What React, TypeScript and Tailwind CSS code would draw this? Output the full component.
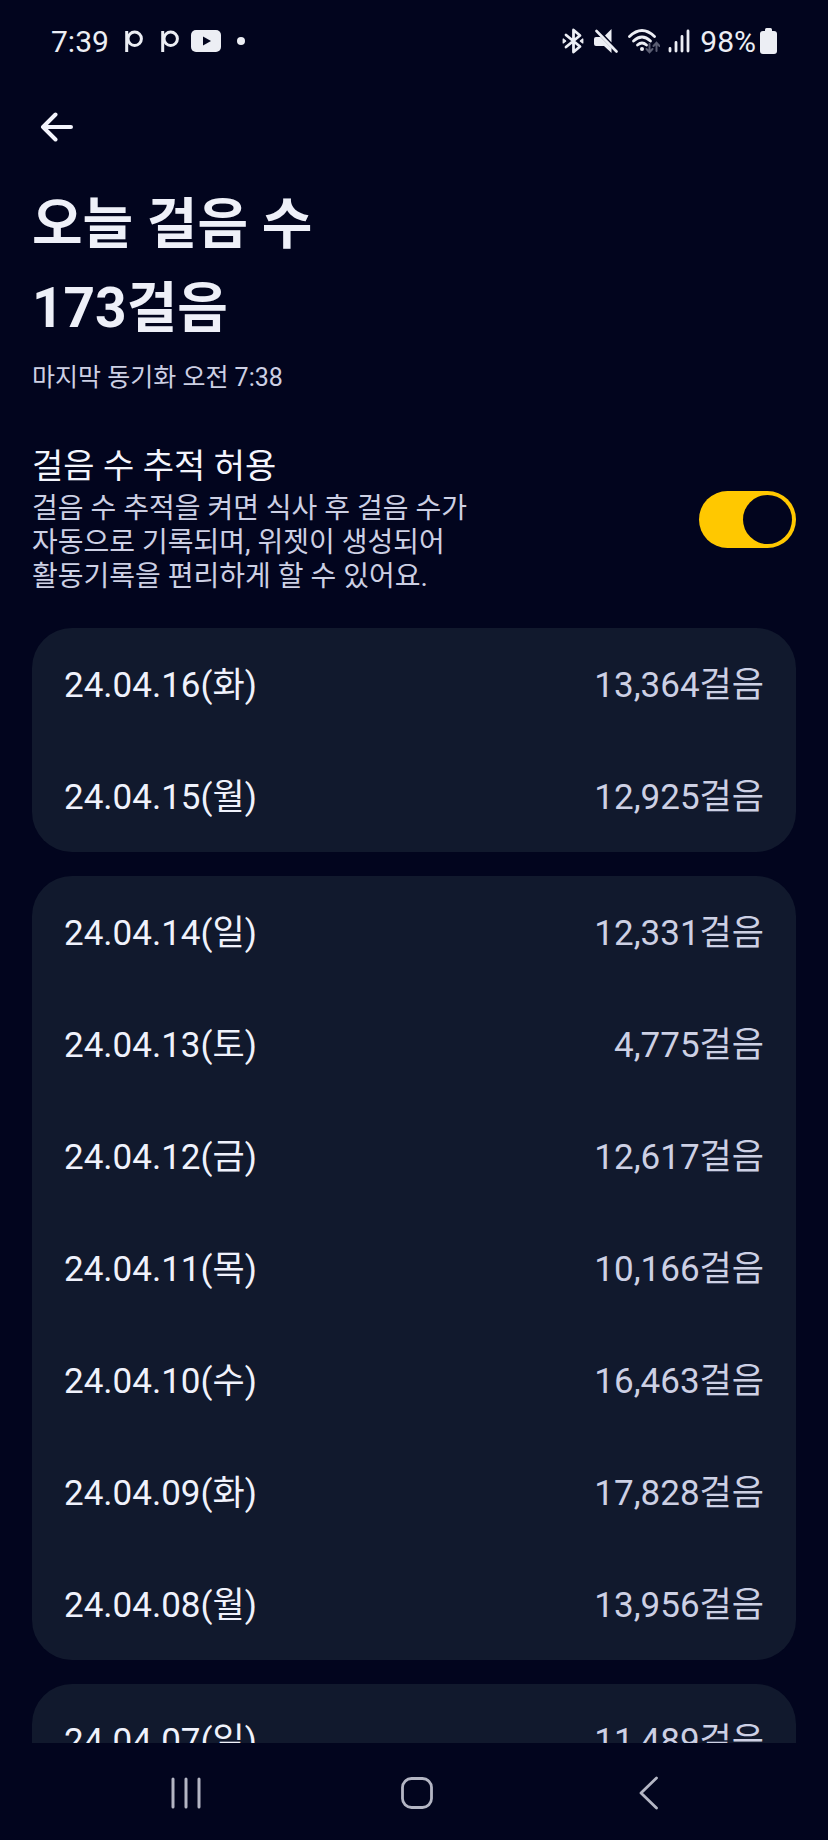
import { useState } from "react";

type StepRecord = {
  date: string;
  steps: number;
};

const weeks: StepRecord[][] = [
  [
    { date: "24.04.16(화)", steps: 13364 },
    { date: "24.04.15(월)", steps: 12925 },
  ],
  [
    { date: "24.04.14(일)", steps: 12331 },
    { date: "24.04.13(토)", steps: 4775 },
    { date: "24.04.12(금)", steps: 12617 },
    { date: "24.04.11(목)", steps: 10166 },
    { date: "24.04.10(수)", steps: 16463 },
    { date: "24.04.09(화)", steps: 17828 },
    { date: "24.04.08(월)", steps: 13956 },
  ],
  [{ date: "24.04.07(일)", steps: 11489 }],
];

const PIcon = () => (
  <svg width="18" height="22" viewBox="0 0 18 22" fill="none" stroke="currentColor" strokeWidth="3">
    <path d="M1.7 1v21" />
    <circle cx="9.7" cy="8.7" r="6.7" />
  </svg>
);

const VideoIcon = () => (
  <svg width="30" height="22" viewBox="0 0 30 22">
    <rect width="30" height="22" rx="5" fill="currentColor" />
    <path d="M12 6.5v9l8-4.5z" fill="#02051e" />
  </svg>
);

const BluetoothIcon = () => (
  <svg width="22" height="26" viewBox="0 0 22 26" fill="none" stroke="currentColor" strokeWidth="2.8" strokeLinejoin="round" strokeLinecap="round">
    <path d="M4 7 18 18.5 11.5 24V2L18 7.5 4 19" />
    <path d="M1.2 11v4l2.5-2zM20.8 11v4l-2.5-2z" fill="currentColor" strokeWidth="1.2" />
  </svg>
);

const MuteIcon = () => (
  <svg width="24" height="26" viewBox="0 0 24 26" fill="currentColor">
    <path d="M11 7.5 17.5 1v13.5z" />
    <path d="M2 9h4.5L17.5 20v5L10 18H2q-2 0-2-2v-5q0-2 2-2z" />
    <path d="m2.5 3 20 20.5" stroke="currentColor" strokeWidth="2.6" strokeLinecap="round" />
  </svg>
);

const WifiIcon = () => (
  <svg width="32" height="26" viewBox="0 0 32 26" fill="none" strokeWidth="2.8" strokeLinecap="round">
    <g stroke="currentColor">
      <path d="M1.5 8.5Q14 -3.5 26.5 8.5" />
      <path d="M5.5 13Q14 5 22.5 13" />
      <path d="M9.5 17Q14 13 18.5 17" />
    </g>
    <circle cx="14" cy="21" r="2" fill="currentColor" />
    <path d="M21.5 16v8m-3-3 3 3.2 3-3.2M28.5 23v-8m-3 3 3-3.2 3 3.2" stroke="#5a5d72" strokeWidth="2" />
  </svg>
);

const SignalIcon = () => (
  <svg width="22" height="24" viewBox="0 0 22 24" stroke="currentColor" strokeWidth="2.8" strokeLinecap="round">
    <path d="M2 19.5V22M8 13.5V22M14 7.5V22M20 2V22" />
  </svg>
);

const BatteryIcon = () => (
  <svg width="17" height="26" viewBox="0 0 17 26" fill="currentColor">
    <rect x="5" width="7" height="6" rx="1.5" />
    <rect y="3" width="17" height="23" rx="3" />
  </svg>
);

const StatusBar = () => (
  <div className="flex h-[82px] shrink-0 items-center justify-between px-[51px] text-[30px] text-[#eceef4]">
    <div className="flex items-center">
      <span>7:39</span>
      <div className="ml-4 flex items-center gap-[18px]">
        <PIcon />
        <PIcon />
      </div>
      <div className="ml-3 flex items-center gap-4">
        <VideoIcon />
        <span className="size-2 rounded-full bg-current" />
      </div>
    </div>
    <div className="flex items-center gap-[10px]">
      <BluetoothIcon />
      <MuteIcon />
      <div className="flex items-center gap-2">
        <WifiIcon />
        <SignalIcon />
      </div>
      <div className="flex items-center gap-1">
        <span>98%</span>
        <BatteryIcon />
      </div>
    </div>
  </div>
);

const TrackingSwitch = () => {
  const [enabled, setEnabled] = useState(true);

  return (
    <section className="mt-[46px] flex items-center justify-between">
      <div>
        <label htmlFor="tracking" className="block text-[34px] leading-[44px] text-[#f4f5fd]">
          걸음 수 추적 허용
        </label>
        <p id="tracking-info" className="mt-1 text-[28px] leading-[34px] text-[#cdd0e4]">
          걸음 수 추적을 켜면 식사 후 걸음 수가
          <br />
          자동으로 기록되며, 위젯이 생성되어
          <br />
          활동기록을 편리하게 할 수 있어요.
        </p>
      </div>
      <input
        id="tracking"
        type="checkbox"
        role="switch"
        aria-describedby="tracking-info"
        checked={enabled}
        onChange={(e) => setEnabled(e.target.checked)}
        className="flex h-[57px] w-[97px] shrink-0 cursor-pointer appearance-none items-center rounded-full bg-slate-600 px-1 before:size-[49px] before:rounded-full before:bg-[#02051e] checked:justify-end checked:bg-[#ffc800]"
      />
    </section>
  );
};

const StepTable = ({ records }: { records: StepRecord[] }) => (
  <div className="rounded-[40px] bg-[#11192d] px-8">
    <table className="w-full text-[35px]">
      <tbody>
        {records.map(({ date, steps }) => (
          <tr key={date} className="h-28">
            <th scope="row" className="p-0 pt-1 text-left font-normal text-[#f0f2fc]">
              {date}
            </th>
            <td className="p-0 pt-1 text-right text-[#cdd0e4]">
              {steps.toLocaleString("en-US")}걸음
            </td>
          </tr>
        ))}
      </tbody>
    </table>
  </div>
);

const NavigationBar = () => (
  <nav className="grid h-[97px] shrink-0 grid-cols-3 pt-[2px] pr-16 pl-[70px] text-[#b4b6c4]">
    <button type="button" aria-label="최근 앱" className="flex items-center justify-center">
      <svg width="30" height="32" viewBox="0 0 30 32" stroke="currentColor" strokeWidth="3" strokeLinecap="round">
        <path d="M2 2v28M15 2v28M28 2v28" />
      </svg>
    </button>
    <button type="button" aria-label="홈" className="flex items-center justify-center">
      <svg width="32" height="32" viewBox="0 0 32 32" fill="none" stroke="currentColor" strokeWidth="2.8">
        <rect x="1.5" y="1.5" width="29" height="29" rx="9" />
      </svg>
    </button>
    <button type="button" aria-label="뒤로" className="flex items-center justify-center">
      <svg width="19" height="34" viewBox="0 0 19 34" fill="none" stroke="currentColor" strokeWidth="2.8" strokeLinecap="round" strokeLinejoin="round">
        <path d="M17.5 2 2 17l15.5 15" />
      </svg>
    </button>
  </nav>
);

const App = () => {
  return (
    <div className="flex h-screen flex-col bg-[#02051e] font-[Roboto,'Noto_Sans_CJK_KR',sans-serif]">
      <StatusBar />
      <header className="flex h-[90px] shrink-0 items-center px-10">
        <button type="button" aria-label="이전" className="text-[#f4f5fd]">
          <svg width="34" height="30" viewBox="0 0 34 30" fill="none" stroke="currentColor" strokeWidth="4" strokeLinecap="round" strokeLinejoin="round">
            <path d="M31 15H3M15.5 2.5 3 15l12.5 12.5" />
          </svg>
        </button>
      </header>
      <main className="min-h-0 flex-1 overflow-y-auto px-8 [scrollbar-width:none]">
        <h1 className="mt-[10px] text-[55px] leading-[84px] font-bold text-[#eef0f8]">
          오늘 걸음 수
          <br />
          173걸음
        </h1>
        <p className="mt-2 text-[25px] leading-[40px] text-[#cdd0e4]">마지막 동기화 오전 7:38</p>
        <TrackingSwitch />
        <div className="mt-[34px] flex flex-col gap-6">
          {weeks.map((records) => (
            <StepTable key={records[0].date} records={records} />
          ))}
        </div>
      </main>
      <NavigationBar />
    </div>
  );
};

export default App;
